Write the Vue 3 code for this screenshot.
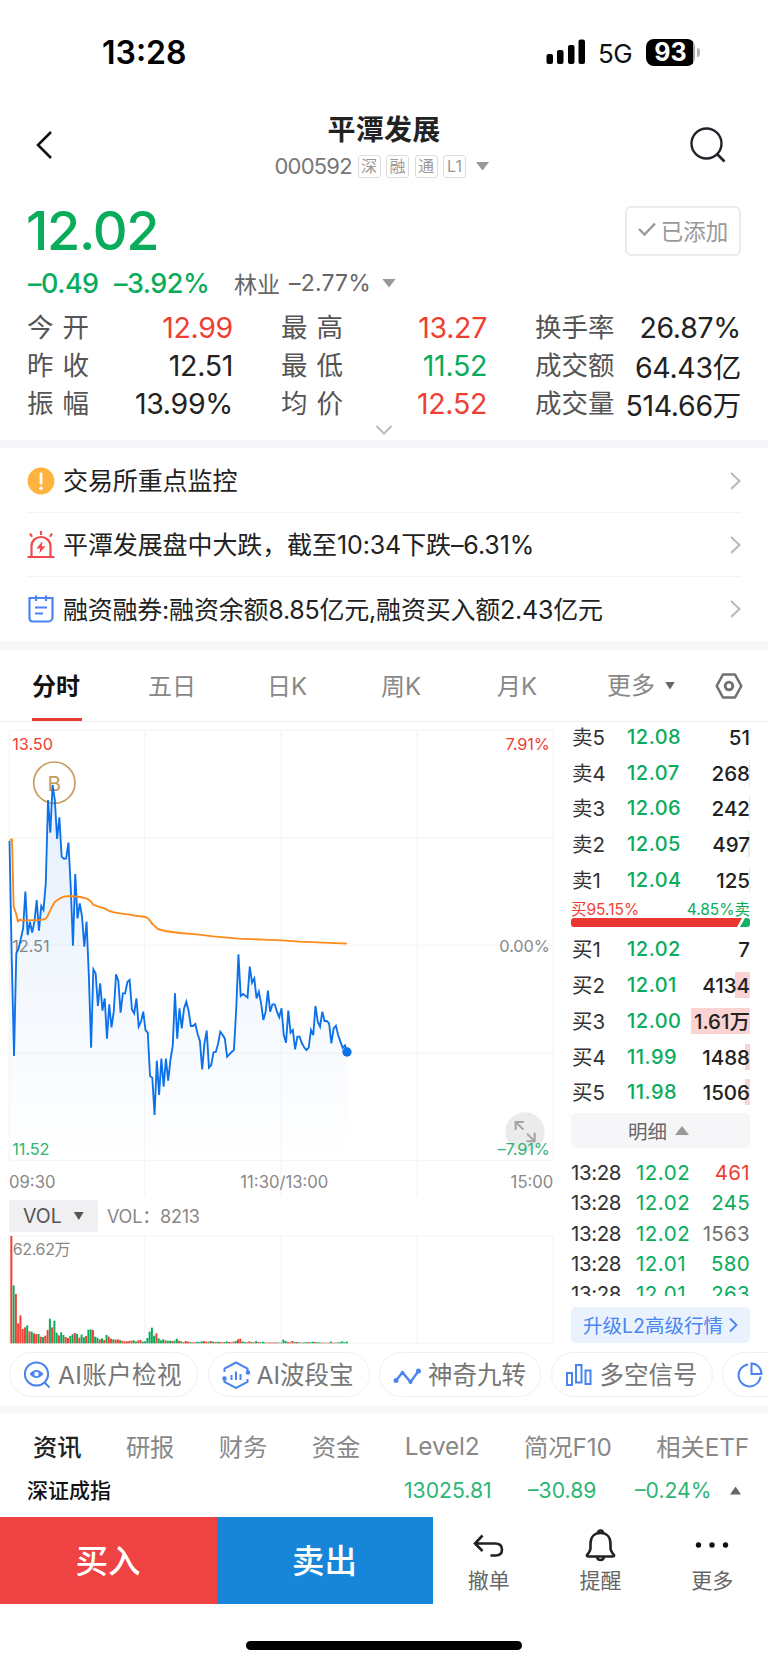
<template>
  <div class="stock-page">
    <!-- 状态栏 -->
    <div class="status-bar">
      <span class="clock">13:28</span>
      <div class="status-right">
        <svg class="signal" width="40" height="26" viewBox="0 0 40 26">
          <rect x="0.5" y="15" width="6.5" height="10" rx="2" />
          <rect x="11" y="11" width="6.5" height="14" rx="2" />
          <rect x="22" y="6" width="6.5" height="19" rx="2" />
          <rect x="32.5" y="0.5" width="6.5" height="24.5" rx="2" />
        </svg>
        <span class="network">5G</span>
        <div class="battery"><span>93</span></div>
        <i class="battery-cap"></i>
      </div>
    </div>

    <!-- 标题 -->
    <header class="header">
      <svg class="back" width="20" height="32" viewBox="0 0 20 32">
        <path d="M17 3 L4 16 L17 29" fill="none" stroke="#111" stroke-width="2.6" />
      </svg>
      <div class="title-box">
        <h1>平潭发展</h1>
        <div class="code-row">
          <span class="code">000592</span>
          <span v-for="tag in tags" :key="tag" class="tag">{{ tag }}</span>
          <i class="tri-down"></i>
        </div>
      </div>
      <svg class="search" width="38" height="38" viewBox="0 0 38 38">
        <circle cx="17.5" cy="17.5" r="15" fill="none" stroke="#23232b" stroke-width="2.4" />
        <path d="M27.5 27.5 L35.5 35.5" stroke="#23232b" stroke-width="2.6" />
      </svg>
    </header>

    <!-- 报价 -->
    <section class="quote">
      <div class="price-row">
        <span class="price">12.02</span>
        <button class="added">
          <svg width="18" height="15" viewBox="0 0 18 15">
            <path d="M1 7 L6.5 12.5 L17 1.5" fill="none" stroke="#999" stroke-width="2.4" />
          </svg>
          <span>已添加</span>
        </button>
      </div>
      <div class="change-row">
        <span class="chg">–0.49</span>
        <span class="chg pct">–3.92%</span>
        <span class="industry">林业</span>
        <span class="industry-pct">–2.77%</span>
        <i class="tri-down"></i>
      </div>
      <div class="stats">
        <div v-for="s in stats" :key="s.label" class="stat">
          <span class="stat-label" :class="{ wide: s.label.length === 2 }">{{ s.label }}</span>
          <span class="stat-value" :class="s.color">{{ s.value }}</span>
        </div>
      </div>
      <svg class="expand" width="18" height="10" viewBox="0 0 18 10">
        <path d="M1.5 1 L9 8.5 L16.5 1" fill="none" stroke="#bbb" stroke-width="2" />
      </svg>
    </section>

    <!-- 公告提示 -->
    <section class="notices">
      <div v-for="n in notices" :key="n.icon" class="notice">
        <svg v-if="n.icon === 'warn'" class="notice-icon" viewBox="0 0 28 28">
          <circle cx="14" cy="14" r="13.4" fill="#ffb23e" />
          <rect x="12.6" y="5.5" width="2.8" height="12" rx="1.2" fill="#fff" />
          <circle cx="14" cy="21.2" r="1.8" fill="#fff" />
        </svg>
        <svg v-else-if="n.icon === 'alarm'" class="notice-icon" viewBox="0 0 28 28" fill="none" stroke="#f2494b" stroke-width="2.2">
          <path d="M0.5 26 H27.5 M4.5 26 V15 a9.5 9 0 0 1 19 0 V26 M14 0 V4 M3 2.5 L5 5.8 M25 2.5 L23 5.8" />
          <path d="M15.5 10 L9.5 17.5 H13.2 L12.3 22.5 L18.5 15.2 H14.8 Z" fill="#f2494b" stroke="none" />
        </svg>
        <svg v-else class="notice-icon" viewBox="0 0 28 28" fill="none" stroke="#4a84f0" stroke-width="2.2">
          <path d="M2.5 3 H25.5 V22.5 a4 4 0 0 1 -4 4 H5.5 a3 3 0 0 1 -3 -3 Z M9 0.5 V6 M19 0.5 V6 M8 12.5 H20 M8 18.5 H16" />
        </svg>
        <span class="notice-text">{{ n.text }}</span>
        <svg class="arrow" width="12" height="20" viewBox="0 0 12 20">
          <path d="M2 2 L10.5 10 L2 18" fill="none" stroke="#b8b8b8" stroke-width="2" />
        </svg>
      </div>
    </section>

    <!-- 周期切换 -->
    <nav class="period-tabs">
      <span v-for="(p, i) in periods" :key="p" class="period" :class="{ active: i === 0 }">{{ p }}</span>
      <span class="period more">更多<i class="tri-small"></i></span>
      <svg class="setting" width="28" height="26" viewBox="0 0 28 26" fill="none" stroke="#707070">
        <path d="M8 1.5 H20 L26.3 13 L20 24.5 H8 L1.7 13 Z" stroke-width="2.6" stroke-linejoin="round" />
        <circle cx="14" cy="13" r="3.8" stroke-width="2.8" />
      </svg>
    </nav>

    <section class="market">
      <div class="chart-col">
        <!-- 分时图 -->
        <svg class="trend" width="556" height="478" viewBox="0 0 1668 1434">
          <defs>
            <linearGradient id="area" x1="0" y1="0" x2="0" y2="1">
              <stop offset="0" stop-color="#1a73e8" stop-opacity="0.11" />
              <stop offset="1" stop-color="#1a73e8" stop-opacity="0" />
            </linearGradient>
          </defs>
          <g stroke="#f6f6f7" stroke-width="4">
            <line v-for="y in gridY" :key="'y' + y" x1="28" x2="1660" :y1="y" :y2="y" />
            <line v-for="(x, i) in gridX" :key="'x' + x" :x1="x" :x2="x" y1="25" :y2="i % 4 === 0 ? 1315 : 1422" />
          </g>
          <text x="37" y="83" class="axis red">13.50</text>
          <text x="1649" y="83" class="axis red end">7.91%</text>
          <text x="37" y="690" class="axis">12.51</text>
          <text x="1649" y="690" class="axis end">0.00%</text>
          <text x="37" y="1299" class="axis green">11.52</text>
          <circle cx="1575" cy="1230" r="59" fill="#ebebeb" />
          <path d="M1547 1224 V1200 H1571 M1549 1202 L1570 1223 M1604 1232 V1258 H1580 M1602 1256 L1581 1235" fill="none" stroke="#a3a3a3" stroke-width="6" />
          <text x="1649" y="1299" class="axis green end">–7.91%</text>
          <circle cx="163" cy="182" r="62" fill="none" stroke="#c69a5b" stroke-width="5" />
          <text x="163" y="206" class="mark">B</text>
          <polygon :points="areaPoints" fill="url(#area)" />
          <polyline :points="pricePoints" fill="none" stroke="#0d72ea" stroke-width="5.6" />
          <polyline :points="avgPoints" fill="none" stroke="#ff8a1a" stroke-width="5.6" stroke-linejoin="round" />
          <circle cx="1041" cy="990" r="14" fill="#0d72ea" />
          <text x="27" y="1397" class="axis time">09:30</text>
          <text x="853" y="1397" class="axis time mid">11:30/13:00</text>
          <text x="1660" y="1397" class="axis time end">15:00</text>
        </svg>
        <div class="vol-row">
          <span class="vol-btn">VOL<i class="tri-dark"></i></span>
          <span class="vol-text">VOL：8213</span>
        </div>
        <!-- 成交量 -->
        <svg class="volume" width="556" height="112" viewBox="0 0 1668 336">
          <g stroke="#f6f6f7" stroke-width="4">
            <path d="M28 5 H1660 M28 328 H1660" />
            <line v-for="x in gridX" :key="x" :x1="x" :x2="x" y1="3" y2="328" />
          </g>
          <rect v-for="(b, i) in bars" :key="i" :x="31 + i * 6.8" :y="328 - b.h" width="6" :height="b.h" :fill="b.up ? '#f04134' : '#0aac5c'" />
          <text x="38" y="62" class="axis tight">62.62万</text>
        </svg>
      </div>

      <!-- 五档盘口 -->
      <aside class="book">
        <div v-for="r in asks" :key="r[0]" class="level">
          <span class="lv-name">{{ r[0] }}</span>
          <span class="lv-price">{{ r[1] }}</span>
          <i class="depth ask" :style="{ width: r[3] + 'px' }"></i>
          <span class="lv-vol">{{ r[2] }}</span>
        </div>
        <div class="ratio-text"><span class="red">买95.15%</span><span class="green">4.85%卖</span></div>
        <svg class="ratio-bar" width="179" height="9" viewBox="0 0 179 9">
          <path d="M3 0 H171 L166 9 H3 Q0 9 0 6 V3 Q0 0 3 0 Z" fill="#e93630" />
          <path d="M174 0 H176 Q179 0 179 3 V6 Q179 9 176 9 H169 Z" fill="#12b366" />
        </svg>
        <div v-for="r in bids" :key="r[0]" class="level">
          <span class="lv-name">{{ r[0] }}</span>
          <span class="lv-price">{{ r[1] }}</span>
          <i class="depth bid" :style="{ width: r[3] + 'px' }"></i>
          <span class="lv-vol">{{ r[2] }}</span>
        </div>
        <div class="detail-btn">明细<i class="tri-up"></i></div>
        <div class="ticks">
          <div v-for="(t, i) in ticks" :key="i" class="tick">
            <span class="tk-time">13:28</span>
            <span class="tk-price">{{ t[0] }}</span>
            <span class="tk-vol" :class="t[2]">{{ t[1] }}</span>
          </div>
        </div>
        <div class="upgrade">
          升级L2高级行情
          <svg width="9" height="16" viewBox="0 0 9 16">
            <path d="M1 1.5 L7.5 8 L1 14.5" fill="none" stroke="#4786f1" stroke-width="1.8" />
          </svg>
        </div>
      </aside>
    </section>

    <!-- 工具入口 -->
    <div class="chips">
      <div class="chip c1">
        <svg class="chip-icon" viewBox="0 0 28 28">
          <circle cx="13.5" cy="13" r="11.6" />
          <path d="M21.5 21.5 L26.5 26.5" />
          <path d="M6.5 13 Q13.5 5 20.5 13 Q13.5 21 6.5 13 Z" fill="#4a84f0" stroke="none" />
          <circle cx="13.5" cy="13" r="2.2" fill="#fff" stroke="none" />
        </svg>
        <span>AI账户检视</span>
      </div>
      <div class="chip c2">
        <svg class="chip-icon" viewBox="0 0 28 28">
          <path d="M2.5 11 V7.5 L14 1.5 L25.5 7.5 V12 M25.5 18 V21 L14 27 L2.5 21 V17" />
          <path d="M9.5 14 V19 M14 10.5 V19 M18.5 13 V19" />
          <circle cx="2.5" cy="17.5" r="1.3" fill="#4a84f0" />
          <circle cx="26" cy="11.5" r="1.3" fill="#4a84f0" />
        </svg>
        <span>AI波段宝</span>
      </div>
      <div class="chip c3">
        <svg class="chip-icon" viewBox="0 0 28 28">
          <path d="M3 19.5 L9.5 11.5 L17.5 21 L25.5 10" stroke-width="2.4" />
          <circle cx="3" cy="19.5" r="1.5" fill="#4a84f0" />
          <circle cx="9.5" cy="12" r="1" fill="#4a84f0" />
          <circle cx="17.5" cy="21" r="1" fill="#4a84f0" />
          <circle cx="25.5" cy="10" r="1.5" fill="#4a84f0" />
        </svg>
        <span>神奇九转</span>
      </div>
      <div class="chip c4">
        <svg class="chip-icon" viewBox="0 0 28 28">
          <path d="M2 12 H7 V24 H2 Z M11 4 H16.5 V21.5 H11 Z M20.5 9.5 H25.5 V23 H20.5 Z" />
        </svg>
        <span>多空信号</span>
      </div>
      <div class="chip c5">
        <svg class="chip-icon" viewBox="0 0 28 28">
          <path d="M12 3.5 A11 11 0 1 0 24.5 15.5 M15.5 2.5 V13 H25.5 A10 10.5 0 0 0 15.5 2.5 Z" />
        </svg>
      </div>
    </div>

    <nav class="info-tabs">
      <span v-for="(t, i) in infoTabs" :key="t" :class="{ active: i === 0 }">{{ t }}</span>
    </nav>

    <div class="index-row">
      <span class="index-name">深证成指</span>
      <span class="index-num n1">13025.81</span>
      <span class="index-num n2">–30.89</span>
      <span class="index-num n3">–0.24%</span>
      <i class="tri-up-small"></i>
    </div>

    <!-- 底部操作 -->
    <footer class="actions">
      <button class="buy">买入</button>
      <button class="sell">卖出</button>
      <div class="action">
        <svg width="34" height="34" viewBox="0 0 34 34">
          <path d="M10.5 7.5 L3 15.5 L10.5 23 M3 15.5 H23 Q30 15.5 30 21.5 Q30 27.5 23.5 27.5 H18.5" fill="none" stroke="#222" stroke-width="2.6" />
        </svg>
        <span>撤单</span>
      </div>
      <div class="action">
        <svg width="34" height="34" viewBox="0 0 34 34" fill="none" stroke="#222" stroke-width="2.6">
          <path d="M16.5 5 C10 5 6.5 9.5 6.5 15.5 V20 Q6.5 23 3 27 Q2.5 28.5 4.5 28.5 H28.5 Q30.5 28.5 30 27 Q26.5 23 26.5 20 V15.5 C26.5 9.5 23 5 16.5 5 Z" />
          <path d="M14 5 Q14 2.5 16.5 2.5 Q19 2.5 19 5 M13 29 Q13.5 32 16.5 32 Q19.5 32 20 29" />
        </svg>
        <span>提醒</span>
      </div>
      <div class="action">
        <svg width="34" height="34" viewBox="0 0 34 34" fill="#111">
          <circle cx="3.5" cy="17" r="2.7" />
          <circle cx="17" cy="17" r="2.7" />
          <circle cx="30.5" cy="17" r="2.7" />
        </svg>
        <span>更多</span>
      </div>
    </footer>
    <div class="home-bar"></div>
  </div>
</template>

<script setup>
const tags = ['深', '融', '通', 'L1']

const stats = [
  { label: '今开', value: '12.99', color: 'red' },
  { label: '最高', value: '13.27', color: 'red' },
  { label: '换手率', value: '26.87%' },
  { label: '昨收', value: '12.51' },
  { label: '最低', value: '11.52', color: 'green' },
  { label: '成交额', value: '64.43亿' },
  { label: '振幅', value: '13.99%' },
  { label: '均价', value: '12.52', color: 'red' },
  { label: '成交量', value: '514.66万' }
]

const notices = [
  { icon: 'warn', text: '交易所重点监控' },
  { icon: 'alarm', text: '平潭发展盘中大跌，截至10:34下跌–6.31%' },
  { icon: 'margin', text: '融资融券:融资余额8.85亿元,融资买入额2.43亿元' }
]

const periods = ['分时', '五日', '日K', '周K', '月K']
const infoTabs = ['资讯', '研报', '财务', '资金', 'Level2', '简况F10', '相关ETF']

// 名称, 价格, 数量, 深度宽度
const asks = [
  ['卖5', '12.08', '51', 0],
  ['卖4', '12.07', '268', 1],
  ['卖3', '12.06', '242', 1],
  ['卖2', '12.05', '497', 2],
  ['卖1', '12.04', '125', 1]
]
const bids = [
  ['买1', '12.02', '7', 0],
  ['买2', '12.01', '4134', 15],
  ['买3', '12.00', '1.61万', 59],
  ['买4', '11.99', '1488', 5],
  ['买5', '11.98', '1506', 5]
]
const ticks = [
  ['12.02', '461', 'red'],
  ['12.02', '245', 'green'],
  ['12.02', '1563', 'gray'],
  ['12.01', '580', 'green'],
  ['12.01', '263', 'green']
]

const gridX = [28, 434, 843, 1251, 1660]
const gridY = [25, 348, 670, 993, 1315]

// 每分钟一个点
const trend = [
  356, 714, 1002, 694, 680, 650, 619, 509, 639, 599, 632, 599, 534, 626, 552, 564, 484, 234, 332, 189,
  234, 351, 286, 404, 410, 409, 362, 494, 671, 456, 589, 544, 584, 674, 599, 760, 977, 742, 754, 852,
  784, 866, 829, 950, 847, 916, 869, 757, 776, 872, 814, 814, 780, 774, 862, 874, 829, 914, 899, 869,
  924, 932, 1062, 1067, 1179, 1016, 1119, 1010, 1094, 1010, 1076, 1014, 972, 814, 950, 859, 919, 859, 839, 866,
  912, 912, 906, 936, 957, 1042, 964, 926, 1037, 1029, 991, 990, 966, 929, 938, 950, 1004, 997, 990, 984,
  864, 697, 822, 816, 821, 827, 734, 782, 769, 829, 809, 844, 894, 869, 806, 869, 847, 847, 869, 886,
  859, 939, 962, 866, 932, 924, 982, 944, 944, 964, 976, 984, 977, 924, 939, 852, 899, 914, 869, 897,
  897, 904, 964, 919, 911, 939, 959, 978, 970, 990
]
const pricePoints = trend.map((y, i) => `${(28.5 + i * 6.8).toFixed(1)},${y}`).join(' ')
const areaPoints = `28.5,1315 ${pricePoints} 1041,1315`

const avgPoints =
  '30,354 36,352 41,554 48,574 54,599 60,592 64,595 120,594 136,591 142,584 155,556 165,539 178,530 192,524 ' +
  '210,522 240,525 262,530 270,536 280,548 295,554 315,560 328,567 342,571 365,575 385,577 405,581 437,585 ' +
  '446,591 458,607 474,621 495,627 540,633 590,637 640,643 715,650 790,653 845,655 900,659 1041,665'

// r 涨 g 跌
const volumes =
  'r322 g174 r148 r60 r84 r43 r48 g54 r36 g35 r30 r28 g28 r20 g19 r23 r40 g74 r48 g68 g32 r24 g33 g25 r19 ' +
  'r16 g22 g27 r31 g28 r17 g26 g18 r22 g41 g42 r40 g20 g17 r12 g15 r10 g25 r20 r14 g12 r11 r12 g10 r7 r6 ' +
  'r6 r7 r8 g9 g5 r9 r10 g5 g6 g16 g35 g47 g23 r30 g15 g9 g12 r9 g8 g8 r7 g8 g14 r8 g6 r4 r7 r5 g4 r3 r3 ' +
  'g5 g4 g6 r7 r5 g5 r7 g5 r4 g5 r4 r3 g4 g6 r4 r3 r5 g7 r12 r14 g6 g4 r3 r6 g4 r3 g7 r4 g3 g5 g3 r2 r3 r2 ' +
  'r3 g3 r2 g2 g11 g7 r4 r3 r7 g4 r4 g3 r2 g3 g3 r4 g3 g5 r4 g3 g3 r2 g2 r2 r2 g5 r2 r2 g3 g3 g6 g3 g5'
const bars = volumes.split(' ').map((v) => ({ up: v[0] === 'r', h: Number(v.slice(1)) }))
</script>

<style>
body {
  margin: 0;
  background: #fff;
}
</style>

<style scoped>
.stock-page {
  width: 768px;
  height: 1665px;
  overflow: hidden;
  background: #fff;
  color: #222;
  font-family: Inter, 'Noto Sans CJK SC', sans-serif;
  display: flex;
  flex-direction: column;
}

.stock-page > * {
  flex-shrink: 0;
  box-sizing: border-box;
}

span {
  white-space: nowrap;
}

.red {
  color: #f03e33;
}

.green {
  color: #0aac5c;
}

.gray {
  color: #707070;
}

/* 状态栏 */
.status-bar {
  height: 104px;
  display: flex;
  justify-content: space-between;
  padding: 0 68px 0 102px;
}

.clock {
  font-size: 32px;
  line-height: 105px;
  font-weight: 600;
  color: #000;
}

.status-right {
  display: flex;
  align-items: center;
}

.network {
  font-size: 26px;
  width: 34px;
  margin: 2px 14px 0 12px;
  letter-spacing: -0.5px;
  color: #111;
}

.battery {
  width: 49px;
  height: 27px;
  border-radius: 8px;
  background: linear-gradient(90deg, #000 47px, #aaa 47px);
  color: #fff;
  font-size: 25px;
  font-weight: 700;
  line-height: 27px;
  text-align: center;
}

.battery-cap {
  width: 3px;
  height: 9px;
  margin-left: 2px;
  border-radius: 0 4px 4px 0;
  background: #b5b5b5;
}

/* 标题 */
.header {
  height: 94px;
  display: flex;
  justify-content: space-between;
  padding: 0 41px 0 34px;
}

.back {
  margin-top: 25px;
}

.search {
  margin-top: 22px;
}

.title-box {
  display: flex;
  flex-direction: column;
  align-items: center;
  margin-left: 21px;
}

h1 {
  margin: 7px 0 0 4px;
  font-size: 28px;
  line-height: 38px;
  font-weight: 600;
  letter-spacing: 0.3px;
}

.code-row {
  display: flex;
  align-items: center;
  height: 24px;
  margin-top: 5px;
}

.code {
  font-size: 22px;
  color: #777;
  width: 78px;
  margin-right: 5px;
  letter-spacing: -0.8px;
}

.tag {
  box-sizing: border-box;
  width: 23px;
  height: 23px;
  margin-right: 5.5px;
  border: 1.5px solid #ddd;
  border-radius: 3px;
  font-size: 16px;
  line-height: 20px;
  text-align: center;
  color: #999;
}

.tri-down {
  width: 14px;
  height: 9px;
  margin-left: 4px;
  background: #999;
  clip-path: polygon(0 0, 100% 0, 50% 100%);
}

/* 报价 */
.quote {
  height: 250px;
  padding: 8px 27px 0;
  display: flex;
  flex-direction: column;
  border-bottom: 8px solid #f6f6f9;
}

.price-row {
  display: flex;
  justify-content: space-between;
  height: 60px;
}

.price {
  margin-left: -1px;
  font-size: 54px;
  line-height: 50px;
  font-weight: 500;
  letter-spacing: -1.3px;
  color: #0aac5c;
}

.added {
  box-sizing: border-box;
  width: 116px;
  height: 50px;
  display: flex;
  align-items: center;
  justify-content: center;
  gap: 5px;
  border: 2px solid #ebebeb;
  border-radius: 6px;
  background: #fff;
  color: #999;
  font-size: 22.5px;
  font-family: inherit;
  padding: 0 0 3px;
}

.change-row {
  display: flex;
  align-items: center;
  height: 34px;
  color: #666;
}

.chg {
  font-size: 27px;
  font-weight: 500;
  color: #0aac5c;
  width: 86px;
  letter-spacing: -0.5px;
}

.chg:first-child {
  margin-left: 1px;
}

.chg.pct {
  width: 120px;
}

.industry {
  font-size: 23px;
  width: 55px;
}

.industry-pct {
  font-size: 23px;
  letter-spacing: 0.2px;
  width: 89px;
}

.stats {
  display: grid;
  grid-template-columns: 206px 206px 206px;
  column-gap: 48px;
  grid-auto-rows: 37.7px;
  margin-top: 9px;
}

.stat {
  display: flex;
  justify-content: space-between;
  align-items: center;
}

.stat-label {
  margin-top: -4px;
  font-size: 26.5px;
  color: #555;
}

.stat-label.wide {
  letter-spacing: 9px;
}

.stat-value {
  font-size: 28.5px;
  letter-spacing: -0.3px;
}

.expand {
  align-self: center;
  margin-top: 3px;
}

/* 提示 */
.notices {
  height: 202px;
  padding: 1px 27px 0;
  border-bottom: 9px solid #f8f8f9;
}

.notice {
  height: 64px;
  box-sizing: border-box;
  display: flex;
  align-items: center;
  border-bottom: 1px solid #f3f3f3;
}

.notice:last-child {
  border-bottom: none;
}

.notice-icon {
  width: 28px;
  height: 28px;
  margin-right: 8px;
}

.notice-text {
  flex: 1;
  margin-top: -3px;
  font-size: 25px;
  letter-spacing: -0.1px;
}

.notice:last-child .notice-text {
  letter-spacing: -0.22px;
}

/* 周期 */
.period-tabs {
  height: 72px;
  display: flex;
  align-items: center;
  padding: 0 25px 0 32px;
  border-bottom: 1px solid #efefef;
}

.period {
  box-sizing: border-box;
  height: 71px;
  line-height: 73px;
  width: 116px;
  font-size: 24px;
  color: #888;
}

.period.active {
  width: 50px;
  margin-right: 66px;
  color: #111;
  font-weight: 600;
  border-bottom: 3px solid #ea3a36;
}

.period:nth-child(2) {
  width: 119px;
}

.period:nth-child(3) {
  width: 114px;
}

.period.more {
  flex: 1;
  display: flex;
  align-items: center;
  gap: 10px;
  margin-left: -6px;
}

.tri-small {
  width: 10px;
  height: 8px;
  background: #666;
  clip-path: polygon(0 0, 100% 0, 50% 100%);
}

/* 行情 */
.market {
  display: flex;
  height: 626px;
}

.chart-col {
  width: 571px;
  display: flex;
  flex-direction: column;
}

.trend,
.volume {
  display: block;
}

.axis {
  font-size: 49px;
  letter-spacing: -0.3px;
  fill: #888;
}

.axis.time {
  font-size: 50px;
  letter-spacing: 0;
}

.axis.tight {
  font-size: 48px;
  letter-spacing: -1px;
}

.axis.red {
  fill: #f03e33;
}

.axis.green {
  fill: #2fb574;
}

.axis.end {
  text-anchor: end;
}

.axis.mid {
  text-anchor: middle;
}

.mark {
  font-size: 62px;
  fill: #c69a5b;
  text-anchor: middle;
}

.vol-row {
  height: 34px;
  display: flex;
  align-items: flex-start;
  padding-left: 9px;
}

.vol-btn {
  box-sizing: border-box;
  width: 89px;
  height: 32px;
  border-radius: 3px;
  background: #f0f0f2;
  display: flex;
  align-items: center;
  padding-left: 14px;
  gap: 12px;
  font-size: 19.5px;
  color: #555;
}

.tri-dark {
  width: 10px;
  height: 8px;
  background: #555;
  clip-path: polygon(0 0, 100% 0, 50% 100%);
}

.vol-text {
  margin-left: 9px;
  font-size: 18px;
  letter-spacing: -0.2px;
  line-height: 33px;
  color: #888;
}

.book {
  width: 179px;
  padding-top: 1px;
}

.level {
  position: relative;
  height: 35.7px;
  line-height: 29px;
  display: flex;
  font-size: 20px;
}

.lv-name {
  width: 56px;
  padding-left: 1px;
  box-sizing: border-box;
  font-size: 20.5px;
  color: #333;
}

.lv-price {
  flex: 1;
  font-weight: 500;
  color: #0aac5c;
}

.lv-vol {
  position: relative;
  font-size: 20.5px;
  font-weight: 500;
}

.depth {
  position: absolute;
  right: 0;
  top: 1px;
  height: 26px;
}

.depth.ask {
  background: #dcf1e4;
}

.depth.bid {
  background: #fbd3d3;
}

.ratio-text {
  display: flex;
  justify-content: space-between;
  height: 17px;
  line-height: 17px;
  font-size: 15.5px;
}

.ratio-bar {
  display: block;
  margin-bottom: 8px;
}

.detail-btn {
  height: 35px;
  margin-top: -1px;
  border-radius: 5px;
  background: #f6f6f9;
  display: flex;
  align-items: center;
  justify-content: center;
  gap: 8px;
  font-size: 19.5px;
  color: #666;
  box-sizing: border-box;
  padding-right: 4px;
}

.tri-up {
  width: 14px;
  height: 9px;
  background: #999;
  clip-path: polygon(0 100%, 100% 100%, 50% 0);
}

.ticks {
  height: 139px;
  margin: 9px 0 11px;
  overflow: hidden;
}

.tick {
  height: 30.4px;
  line-height: 32px;
  display: flex;
  font-size: 20.5px;
}

.tk-time {
  width: 65px;
  letter-spacing: -0.4px;
  color: #333;
}

.tk-price {
  flex: 1;
  color: #0aac5c;
}

.tk-vol {
  letter-spacing: 0.3px;
}

.lv-price,
.tk-price {
  letter-spacing: 0.5px;
}

.upgrade {
  height: 36px;
  border-radius: 5px;
  background: #eaf2fe;
  display: flex;
  align-items: center;
  justify-content: center;
  gap: 6px;
  font-size: 19.5px;
  color: #4786f1;
}

/* 工具 */
.chips {
  height: 66px;
  display: flex;
  gap: 9.5px;
  padding: 4px 0 0 9px;
  border-bottom: 8px solid #f8f8f9;
}

.chip {
  box-sizing: border-box;
  height: 45px;
  flex-shrink: 0;
  display: flex;
  align-items: center;
  padding-left: 13px;
  gap: 7px;
  border: 1.5px solid #f0f0f0;
  border-radius: 23px;
  font-size: 24.5px;
  color: #777;
}

.chip span {
  margin-top: -3px;
}

.c1 span {
  letter-spacing: 0.4px;
}

.chip-icon {
  width: 28px;
  height: 28px;
  fill: none;
  stroke: #4a84f0;
  stroke-width: 2;
}

.c1 {
  width: 189px;
}

.c2,
.c3,
.c4 {
  width: 162px;
}

.c5 {
  width: 160px;
}

/* 资讯 */
.info-tabs {
  height: 64px;
  display: flex;
  justify-content: space-between;
  align-items: center;
  padding: 0 19px 1px 33px;
  font-size: 24.3px;
  letter-spacing: -0.1px;
  color: #888;
}

.info-tabs .active {
  color: #222;
  font-weight: 500;
}

.index-row {
  height: 25px;
  margin-bottom: 14px;
  padding-left: 27px;
  display: flex;
  align-items: center;
  line-height: 25px;
}

.index-name {
  width: 377px;
  font-size: 21px;
  font-weight: 500;
  color: #111;
}

.index-num {
  font-size: 21.2px;
  color: #2fb574;
}

.n1 {
  width: 124px;
}

.n2 {
  width: 107px;
}

.n3 {
  width: 95px;
}

.tri-up-small {
  width: 11px;
  height: 8px;
  background: #666;
  clip-path: polygon(0 100%, 100% 100%, 50% 0);
}

/* 底部 */
.actions {
  height: 87px;
  display: flex;
}

.buy,
.sell {
  width: 217px;
  border: none;
  padding: 0 1px 4px 0;
  color: #fff;
  font-family: inherit;
  font-size: 32.5px;
  font-weight: 500;
  background: #ef4242;
}

.sell {
  width: 216px;
  background: #1786d8;
}

.action {
  flex: 1;
  display: flex;
  flex-direction: column;
  align-items: center;
  padding-top: 11px;
  font-size: 21px;
  line-height: 30px;
  color: #666;
}

.action span {
  margin-top: 4px;
}

.home-bar {
  width: 276px;
  height: 9px;
  margin: 37px auto 0;
  border-radius: 5px;
  background: #000;
}
</style>
